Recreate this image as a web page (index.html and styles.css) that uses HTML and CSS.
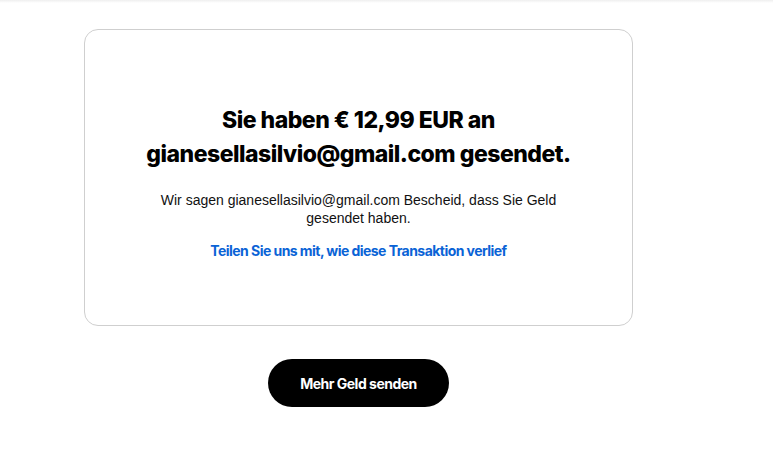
FILE: index.html
```html
<!DOCTYPE html>
<html lang="de">
<head>
<meta charset="utf-8">
<title>Gesendet</title>
<link rel="stylesheet" href="styles.css">
</head>
<body>
<div class="topbar"></div>
<main class="page">
  <section class="card">
    <h1 class="title">Sie haben € 12,99 EUR an<br>gianesellasilvio@gmail.com gesendet.</h1>
    <p class="info">Wir sagen gianesellasilvio@gmail.com Bescheid, dass Sie Geld<br>gesendet haben.</p>
    <a class="feedback" href="#">Teilen Sie uns mit, wie diese Transaktion verlief</a>
  </section>
  <div class="actions">
    <button class="btn" type="button">Mehr Geld senden</button>
  </div>
</main>
</body>
</html>
```
FILE: styles.css
```css
html, body {
  margin: 0;
  padding: 0;
  background: #ffffff;
}
body {
  font-family: "Liberation Sans", Arial, sans-serif;
  color: #000;
}
.topbar {
  height: 3px;
  background: linear-gradient(#efefef, #ffffff);
}
.page {
  width: 549px;
  margin-left: 84px;
  padding-top: 26px;
  display: flex;
  flex-direction: column;
  align-items: center;
}
.card {
  box-sizing: border-box;
  width: 549px;
  border: 1px solid #cfcfcf;
  border-radius: 14px;
  padding: 73px 30px 65px;
  display: flex;
  flex-direction: column;
  align-items: center;
  text-align: center;
}
.title {
  margin: 0 0 20px;
  font-family: Inter, "Liberation Sans", sans-serif;
  font-weight: 800;
  font-size: 23px;
  line-height: 34px;
  letter-spacing: -0.5px;
  color: #000;
}
.info {
  margin: 0 0 15px;
  font-size: 14px;
  line-height: 18px;
  color: #111;
}
.feedback {
  font-family: Inter, "Liberation Sans", sans-serif;
  font-weight: 700;
  font-size: 14px;
  line-height: 18px;
  letter-spacing: -0.55px;
  color: #0a63d6;
  text-decoration: none;
}
.actions {
  margin-top: 33px;
  display: flex;
  justify-content: center;
}
.btn {
  width: 181px;
  height: 48px;
  border: none;
  border-radius: 24px;
  background: #000;
  color: #fff;
  font-family: Inter, "Liberation Sans", sans-serif;
  font-weight: 700;
  font-size: 14px;
  letter-spacing: -0.5px;
  cursor: pointer;
}
```
